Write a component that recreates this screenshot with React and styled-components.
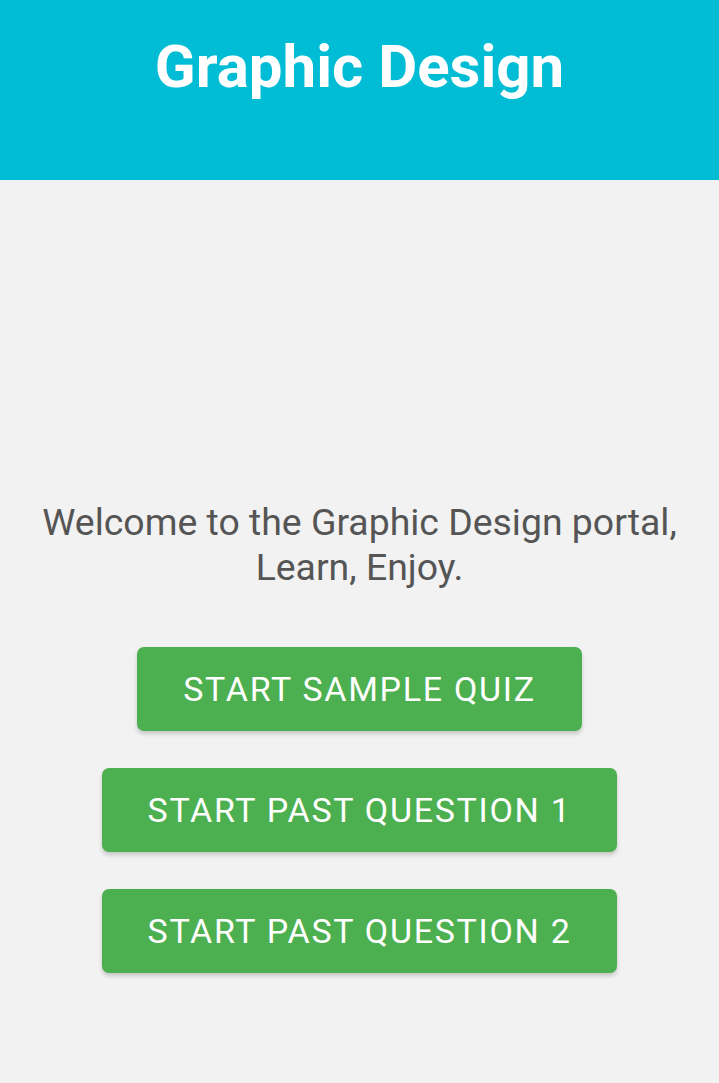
import React from 'react'
import styled, { createGlobalStyle } from 'styled-components'

const GlobalStyle = createGlobalStyle`
    html, body {
        margin: 0;
        padding: 0;
        background: #f2f2f2;
        font-family: Roboto, "Noto Sans", sans-serif;
    }
`

const buttons = ['START SAMPLE QUIZ', 'START PAST QUESTION 1', 'START PAST QUESTION 2']

function App() {
  return (
    <Page>
        <GlobalStyle />
        <Header>
            <Title>Graphic Design</Title>
        </Header>

        <Main>
            <Welcome>
                Welcome to the Graphic Design portal,<br />Learn, Enjoy.
            </Welcome>

            <ButtonList>
                {buttons.map(label => (
                    <StartButton key={label}>{label}</StartButton>
                ))}
            </ButtonList>
        </Main>
    </Page>
  )
}

export default App

const Page = styled.div`
    min-height: 1083px;
    background: #f2f2f2;
    display: flex;
    flex-direction: column;
`

const Header = styled.header`
    height: 180px;
    background: #00bcd4;
    display: flex;
    justify-content: center;
    box-sizing: border-box;
    padding-top: 31px;
`

const Title = styled.h1`
    margin: 0;
    color: #fff;
    font-size: 60px;
    font-weight: 700;
    line-height: 72px;
`

const Main = styled.main`
    display: flex;
    flex-direction: column;
    align-items: center;
    padding-top: 320px;
`

const Welcome = styled.p`
    margin: 0;
    color: #555;
    font-size: 37.4px;
    line-height: 45px;
    text-align: center;
`

const ButtonList = styled.div`
    display: flex;
    flex-direction: column;
    align-items: center;
    gap: 37px;
    margin-top: 57px;
`

const StartButton = styled.button`
    height: 84px;
    padding: 0 46px;
    border: none;
    border-radius: 7px;
    background: #4caf50;
    color: #fff;
    font-family: Roboto, "Noto Sans", sans-serif;
    font-size: 34px;
    letter-spacing: 1.7px;
    box-shadow: 0 3px 4px rgba(0, 0, 0, 0.18);
    cursor: pointer;
`
